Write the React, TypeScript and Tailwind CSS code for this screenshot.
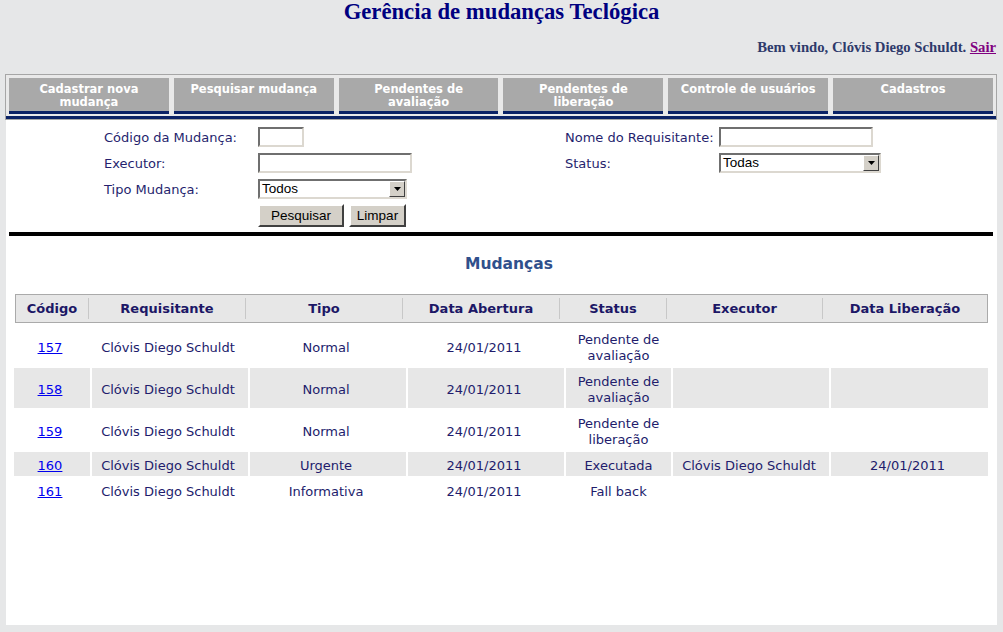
import React from "react";

const tabs = [
    ["Cadastrar nova", "mudança"],
    ["Pesquisar mudança"],
    ["Pendentes de", "avaliação"],
    ["Pendentes de", "liberação"],
    ["Controle de usuários"],
    ["Cadastros"],
];

const headers = ["Código", "Requisitante", "Tipo", "Data Abertura", "Status", "Executor", "Data Liberação"];

const rows = [
    { id: "157", tipo: "Normal", status: "Pendente de avaliação", exec: "", lib: "" },
    { id: "158", tipo: "Normal", status: "Pendente de avaliação", exec: "", lib: "" },
    { id: "159", tipo: "Normal", status: "Pendente de liberação", exec: "", lib: "" },
    { id: "160", tipo: "Urgente", status: "Executada", exec: "Clóvis Diego Schuldt", lib: "24/01/2011" },
    { id: "161", tipo: "Informativa", status: "Fall back", exec: "", lib: "" },
];

function TextBox({ w }: { w: string }) {
    return (
        <div className={`${w} h-[20px] bg-white border-2 border-t-[#6f6f6f] border-l-[#6f6f6f] border-b-[#dcd8d0] border-r-[#dcd8d0]`} />
    );
}

function Select({ w, value }: { w: string; value: string }) {
    return (
        <div className={`${w} h-[20px] bg-white flex items-stretch border-2 border-t-[#6f6f6f] border-l-[#6f6f6f] border-b-[#dcd8d0] border-r-[#dcd8d0]`}>
            <span className="flex-1 pl-[2px] text-[13.5px] leading-[16px] text-black font-['Liberation_Sans',sans-serif]">{value}</span>
            <span className="w-[16px] flex items-center justify-center bg-[#d4d0c8] border border-t-white border-l-white border-b-[#404040] border-r-[#404040]">
                <svg width="7" height="4" viewBox="0 0 7 4"><path d="M0 0h7L3.5 4z" fill="#000" /></svg>
            </span>
        </div>
    );
}

function Button({ label, w }: { label: string; w: string }) {
    return (
        <button className={`${w} h-[23px] bg-[#d4d0c8] text-[13.5px] text-black font-['Liberation_Sans',sans-serif] border-2 border-t-white border-l-white border-b-[#404040] border-r-[#404040]`}>
            {label}
        </button>
    );
}

export default function App() {
    return (
        <div className="min-h-[632px] bg-[#e6e7e8] flex flex-col font-['DejaVu_Sans',sans-serif]">
            <h1 className="text-center text-[22.7px] leading-[24px] font-bold text-[#000080] font-['Liberation_Serif',serif]">
                Gerência de mudanças Teclógica
            </h1>
            <div className="mt-[14px] pr-[7px] text-right text-[14.7px] leading-[18px] font-bold text-[#2e3a6b] font-['Liberation_Serif',serif]">
                Bem vindo, Clóvis Diego Schuldt. <a href="#" className="underline text-[#800080]">Sair</a>
            </div>

            {/* menu */}
            <div className="mt-[18px] ml-[5px] w-[992px] border border-[#a6a6a6] bg-[#e9e9e9]">
                <div className="flex gap-[5px] px-[3px] pt-[3px] pb-[2px]">
                    {tabs.map((t) => (
                        <div key={t[0]} className="flex-1 h-[36px] bg-[#a9a9a9] border-b-[3px] border-[#0b2266] pt-[5px] text-center text-white font-bold text-[11.5px] leading-[13px] whitespace-nowrap">
                            {t.map((l) => <div key={l}>{l}</div>)}
                        </div>
                    ))}
                </div>
                <div className="h-[3px] bg-[#0b2266]" />
            </div>

            {/* content */}
            <div className="ml-[6px] w-[991px] h-[505px] bg-white">
                <div className="pl-[98px] pt-[7px] grid grid-cols-[154px_307px_154px_1fr] grid-rows-[20px_20px_20px_23px] gap-y-[6px] items-center text-[13px] text-[#261f6e]">
                    <span className="mt-[2px]">Código da Mudança:</span>
                    <TextBox w="w-[46px]" />
                    <span className="mt-[2px]">Nome do Requisitante:</span>
                    <TextBox w="w-[154px]" />

                    <span className="mt-[2px]">Executor:</span>
                    <TextBox w="w-[154px]" />
                    <span className="mt-[2px]">Status:</span>
                    <Select w="w-[162px]" value="Todas" />

                    <span className="mt-[2px]">Tipo Mudança:</span>
                    <Select w="w-[149px]" value="Todos" />
                    <span />
                    <span />

                    <span />
                    <div className="flex gap-[5px] -mt-[2px]">
                        <Button label="Pesquisar" w="w-[86px]" />
                        <Button label="Limpar" w="w-[57px]" />
                    </div>
                </div>

                <div className="mt-[4px] ml-[3px] w-[984px] h-[4px] bg-black" />

                <h2 className="mt-[18px] pl-[15px] text-center text-[15.5px] leading-[20px] font-bold text-[#30508c]">Mudanças</h2>

                <div className="mt-[20px] ml-[9px] w-[973px] h-[29px] border border-[#aaaaaa] bg-[#e7e7e7] grid grid-cols-[72px_157px_157px_157px_107px_156px_1fr] text-[13px] font-bold text-[#1c1766]">
                    {headers.map((h, i) => (
                        <div key={h} className="flex items-center">
                            {i > 0 && <div className="w-px h-[21px] bg-[#c8c8c8]" />}
                            <span className="flex-1 text-center">{h}</span>
                        </div>
                    ))}
                </div>

                <table className="mt-[1px] ml-[6px] w-[978px] border-separate border-spacing-[2px] text-[13px] leading-[16px] text-[#221c6c] table-fixed">
                    <colgroup>
                        <col className="w-[76px]" />
                        <col className="w-[156px]" />
                        <col className="w-[156px]" />
                        <col className="w-[156px]" />
                        <col className="w-[105px]" />
                        <col className="w-[156px]" />
                        <col className="w-[157px]" />
                    </colgroup>
                    <tbody>
                        {rows.map((r, i) => (
                            <tr key={r.id} className={i % 2 === 1 ? "bg-[#e7e7e7]" : "bg-white"}>
                                <td className="pt-[6px] pb-[2px] pr-[4px] text-center"><a href="#" className="text-[#0000ee] underline">{r.id}</a></td>
                                <td className="pt-[6px] pb-[2px] pr-[4px] text-center">Clóvis Diego Schuldt</td>
                                <td className="pt-[6px] pb-[2px] pr-[4px] text-center">{r.tipo}</td>
                                <td className="pt-[6px] pb-[2px] pr-[4px] text-center">24/01/2011</td>
                                <td className="pt-[6px] pb-[2px] px-[4px] text-center">{r.status}</td>
                                <td className="pt-[6px] pb-[2px] pr-[4px] text-center">{r.exec}</td>
                                <td className="pt-[6px] pb-[2px] pr-[4px] text-center">{r.lib}</td>
                            </tr>
                        ))}
                    </tbody>
                </table>
            </div>
        </div>
    );
}
